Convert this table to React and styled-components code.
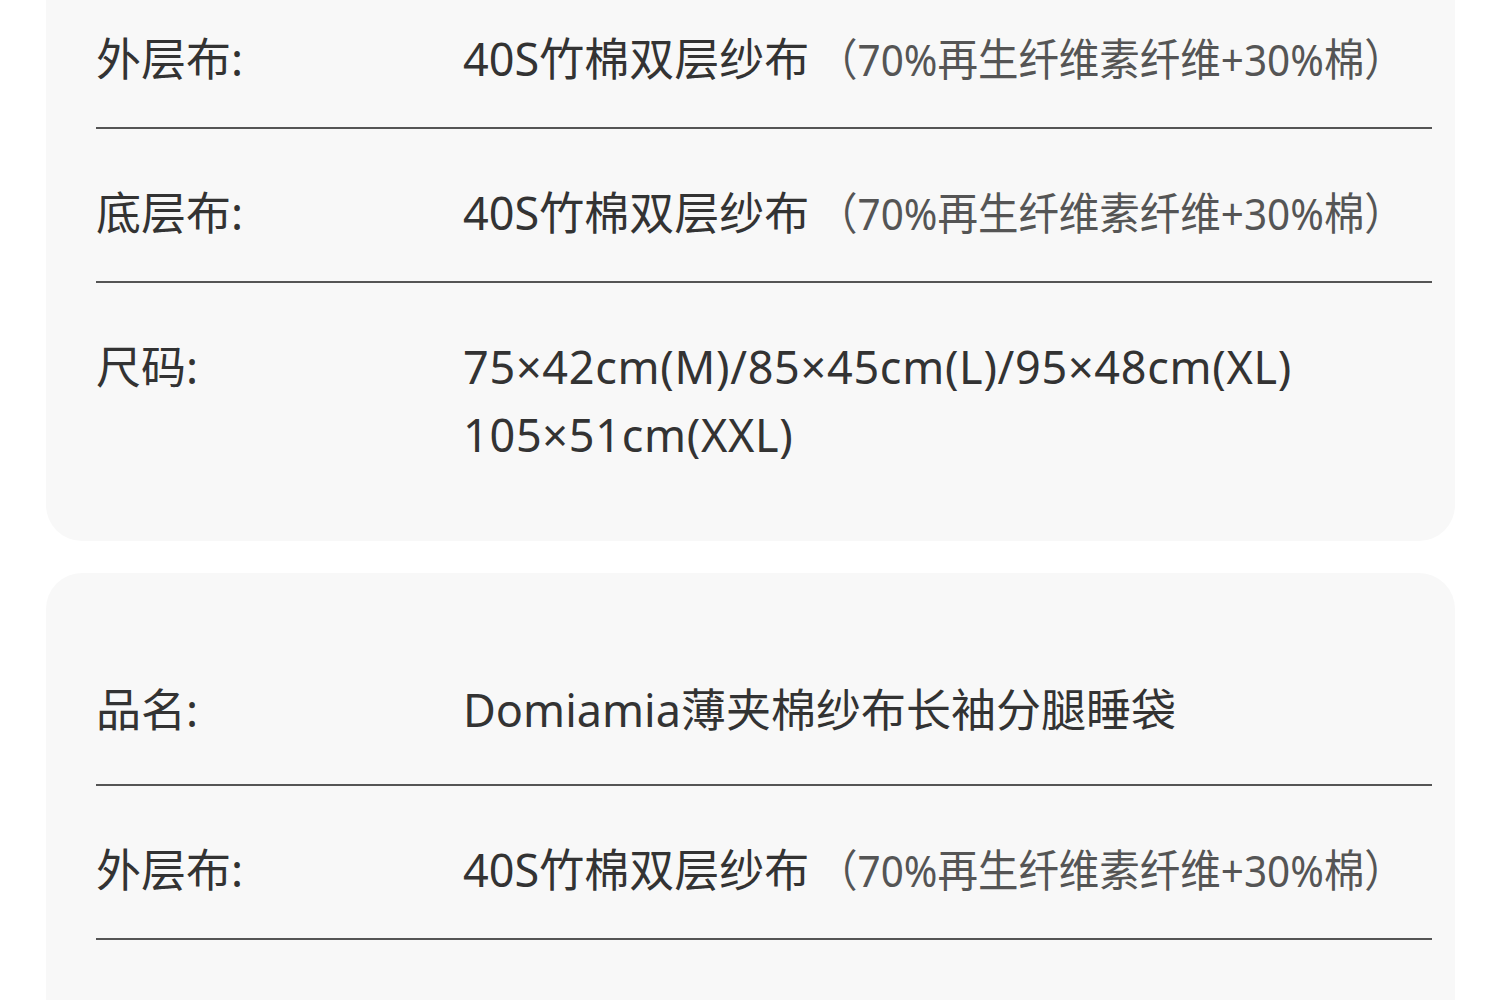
import React from "react"
import styled, { createGlobalStyle } from "styled-components"

const GlobalStyle = createGlobalStyle`
  html, body {
    margin: 0;
    padding: 0;
    background: #ffffff;
  }
  body {
    font-family: "Noto Sans", "Noto Sans CJK SC", sans-serif;
    color: #333333;
    overflow: hidden;
  }
`

const specs = [
  {
    rows: [
      { label: "品名:", value: "Domiamia薄夹棉纱布长袖分腿睡袋" },
      { label: "外层布:", value: "40S竹棉双层纱布", note: "（70%再生纤维素纤维+30%棉）" },
      { label: "底层布:", value: "40S竹棉双层纱布", note: "（70%再生纤维素纤维+30%棉）" },
      { label: "尺码:", lines: ["75×42cm(M)/85×45cm(L)/95×48cm(XL)", "105×51cm(XXL)"] },
    ],
  },
  {
    rows: [
      { label: "品名:", value: "Domiamia薄夹棉纱布长袖分腿睡袋" },
      { label: "外层布:", value: "40S竹棉双层纱布", note: "（70%再生纤维素纤维+30%棉）" },
      { label: "底层布:", value: "40S竹棉双层纱布", note: "（70%再生纤维素纤维+30%棉）" },
      { label: "尺码:", lines: ["75×42cm(M)/85×45cm(L)/95×48cm(XL)", "105×51cm(XXL)"] },
    ],
  },
]

const App = () => {
  return (
    <>
      <GlobalStyle />
      <Page>
        {specs.map((card, i) => (
          <Card key={i}>
            {card.rows.map((row, j) => (
              <Row key={j}>
                <Label>{row.label}</Label>
                <Value>
                  {row.lines
                    ? row.lines.map((line, k) => <Line key={k}>{line}</Line>)
                    : (
                      <>
                        {row.value}
                        {row.note && <Note>{row.note}</Note>}
                      </>
                    )}
                </Value>
              </Row>
            ))}
          </Card>
        ))}
      </Page>
    </>
  )
}

export default App

const Page = styled.div`
  display: flex;
  flex-direction: column;
  gap: 32px;
  padding: 0 45px 0 46px;
  margin-top: -238px;
`

const Card = styled.section`
  background: #f8f8f8;
  border-radius: 36px;
  padding: 59px 23px 38px 50px;
`

const Row = styled.div`
  display: grid;
  grid-template-columns: 367px 1fr;
  padding: 50px 0 34px;
  border-bottom: 2px solid #555555;
  font-size: 45px;
  line-height: 68px;

  &:first-child {
    padding: 44px 0 40px;
  }

  &:last-child {
    border-bottom: none;
  }
`

const Label = styled.div`
  color: #333333;
  white-space: nowrap;
`

const Value = styled.div`
  color: #333333;
  white-space: nowrap;
`

const Line = styled.div`
  letter-spacing: 0.7px;
`

const Note = styled.span`
  display: inline-block;
  margin-left: 8px;
  color: #555555;
  font-size: 44px;
  transform: scaleX(0.92);
  transform-origin: left center;
`
